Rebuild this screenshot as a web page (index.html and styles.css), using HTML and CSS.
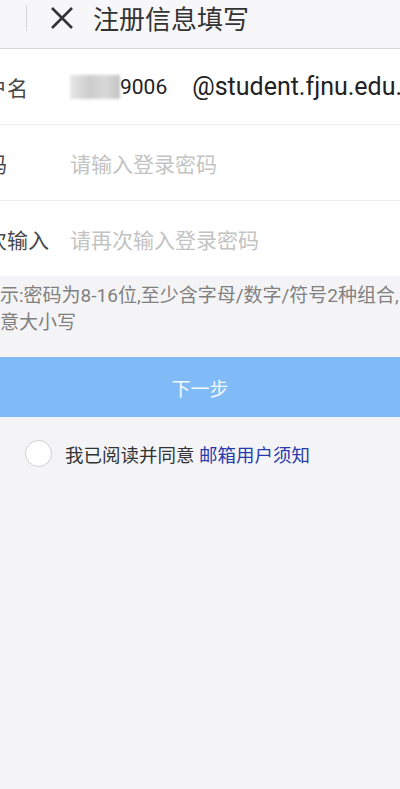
FILE: index.html
```html
<!DOCTYPE html>
<html lang="zh-CN">
<head>
    <meta charset="UTF-8">
    <meta name="viewport" content="width=device-width, initial-scale=1.0">
    <title>注册信息填写</title>
    <link rel="stylesheet" href="styles.css">
</head>
<body>
    <div class="page">
        <div class="top-bar">
            <span class="top-sep"></span>
            <svg class="close-icon" width="24" height="24" viewBox="0 0 24 24">
                <path d="M2 2 L22 22 M22 2 L2 22" stroke="#333" stroke-width="2.6" fill="none"/>
            </svg>
            <span class="top-title">注册信息填写</span>
        </div>

        <div class="form">
            <div class="row">
                <span class="label">用户名</span>
                <div class="value">
                    <span class="blur"></span><span class="num">9006</span>
                    <span class="domain">@student.fjnu.edu.cn</span>
                </div>
            </div>
            <div class="row">
                <span class="label">密码</span>
                <span class="placeholder">请输入登录密码</span>
            </div>
            <div class="row">
                <span class="label">再次输入</span>
                <span class="placeholder">请再次输入登录密码</span>
            </div>
        </div>

        <p class="hint">提示:密码为8-16位,至少含字母/数字/符号2种组合,<br>注意大小写</p>

        <button class="next-btn">下一步</button>

        <div class="agree">
            <span class="radio"></span>
            <span class="agree-text">我已阅读并同意 <a class="agree-link">邮箱用户须知</a></span>
        </div>
    </div>
</body>
</html>
```

FILE: styles.css
```css
body{
    margin: 0;
    padding: 0;
    overflow: hidden;
    background-color: #f4f4f6;
    font-family: Roboto, "Noto Sans CJK SC", sans-serif;
}

.page{
    width: 476px;
    margin-left: -38px;
    height: 789px;
    background-color: #f4f4f6;
}

.top-bar{
    display: flex;
    align-items: center;
    height: 36px;
    padding-bottom: 12px;
    box-sizing: content-box;
    background-color: #f7f7f9;
    border-bottom: 1px solid #d6d6d8;
}

.top-sep{
    width: 1px;
    height: 26px;
    margin-left: 64px;
    background-color: #d8d8d8;
}

.close-icon{
    margin-left: 23px;
}

.top-title{
    margin-left: 19px;
    margin-top: -2px;
    font-size: 26px;
    color: #333;
}

.form{
    background-color: #ffffff;
}

.row{
    display: grid;
    grid-template-columns: 108px 1fr;
    align-items: center;
    height: 75px;
    border-bottom: 1px solid #eeeeee;
}

.row:last-child{
    border-bottom: none;
}

.label{
    padding-left: 3px;
    font-size: 21px;
    color: #484848;
}

.value{
    display: flex;
    align-items: center;
    white-space: nowrap;
}

.blur{
    width: 50px;
    height: 24px;
    background: linear-gradient(90deg, #e6e6e6, #cccccc 40%, #d9d9d9 70%, #c4c4c4);
    filter: blur(1.5px);
}

.num{
    font-size: 21px;
    color: #222;
}

.domain{
    margin-left: 25px;
    font-size: 25px;
    color: #222;
}

.placeholder{
    font-size: 21px;
    color: #c3c3c3;
}

.hint{
    margin: 0;
    padding: 6px 0 0 19px;
    height: 74px;
    box-sizing: border-box;
    font-size: 19px;
    line-height: 27px;
    color: #808080;
}

.next-btn{
    display: block;
    width: 100%;
    height: 60px;
    margin-top: 7px;
    border: none;
    background-color: #80bbf7;
    color: #f4f8ff;
    font-family: Roboto, "Noto Sans CJK SC", sans-serif;
    font-size: 19px;
}

.agree{
    display: flex;
    align-items: center;
    margin-top: 23px;
    padding-left: 63px;
}

.radio{
    width: 25px;
    height: 25px;
    border: 1.5px solid #cfcfcf;
    border-radius: 50%;
    background-color: #fff;
}

.agree-text{
    margin-left: 13px;
    font-size: 18.5px;
    color: #333;
}

.agree-link{
    color: #2a3bab;
}
```
